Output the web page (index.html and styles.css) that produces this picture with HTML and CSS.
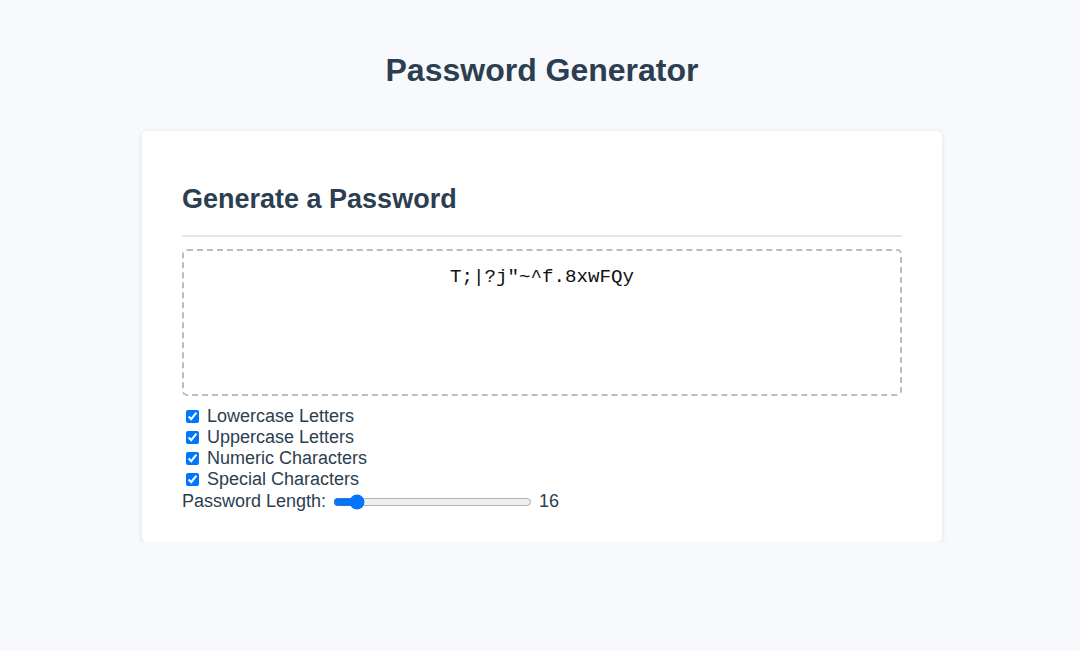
FILE: index.html
```html
<!DOCTYPE html>
<html lang="en">
<head>
<meta charset="utf-8">
<title>Password Generator</title>
<link rel="stylesheet" href="styles.css">
</head>
<body>
<main class="page">
  <h1 class="title">Password Generator</h1>
  <section class="card">
    <h2 class="card-title">Generate a Password</h2>
    <hr class="divider">
    <div class="output">T;|?j"~^f.8xwFQy</div>
    <div class="options">
      <label class="option"><input type="checkbox" checked> Lowercase Letters</label>
      <label class="option"><input type="checkbox" checked> Uppercase Letters</label>
      <label class="option"><input type="checkbox" checked> Numeric Characters</label>
      <label class="option"><input type="checkbox" checked> Special Characters</label>
      <div class="length">Password Length: <input class="range" type="range" min="8" max="100" value="16"> <span>16</span></div>
    </div>
  </section>
</main>
</body>
</html>
```
FILE: styles.css
```css
html, body {
  margin: 0;
  padding: 0;
}
body {
  background: #f7f9fc;
  font-family: "Liberation Sans", Arial, Helvetica, sans-serif;
  color: #2c3e50;
}
.page {
  padding: 52px 0 0 4px;
  display: flex;
  flex-direction: column;
  align-items: center;
}
.title {
  margin: 0 0 42px;
  font-size: 32px;
  font-weight: bold;
  line-height: 37px;
  color: #2c3e50;
}
.card {
  box-sizing: border-box;
  width: 800px;
  background: #ffffff;
  border-radius: 5px;
  box-shadow: 0 1px 5px rgba(30, 40, 60, 0.12);
  padding: 30px 40px 30px;
}
.card-title {
  margin: 23px 0 0;
  font-size: 27px;
  line-height: 31px;
  font-weight: bold;
  color: #2c3e50;
}
.divider {
  margin: 20px 0 12px;
  border: 0;
  height: 2px;
  background: #e2e5e9;
}
.output {
  box-sizing: border-box;
  height: 147px;
  border: 2px dashed #b9bdc3;
  border-radius: 5px;
  padding: 15px;
  text-align: center;
  font-family: "Liberation Mono", "Courier New", monospace;
  font-size: 19.2px;
  color: #111;
}
.options {
  margin-top: 10px;
  display: flex;
  flex-direction: column;
  font-size: 18px;
  color: #2c3e50;
}
.option {
  display: block;
  line-height: 21px;
}
.option input {
  margin: 3px 3px 3px 4px;
  vertical-align: -1px;
}
.length {
  line-height: 22px;
}
.range {
  width: 199px;
  margin: 0 2px;
  vertical-align: -3px;
}
```
